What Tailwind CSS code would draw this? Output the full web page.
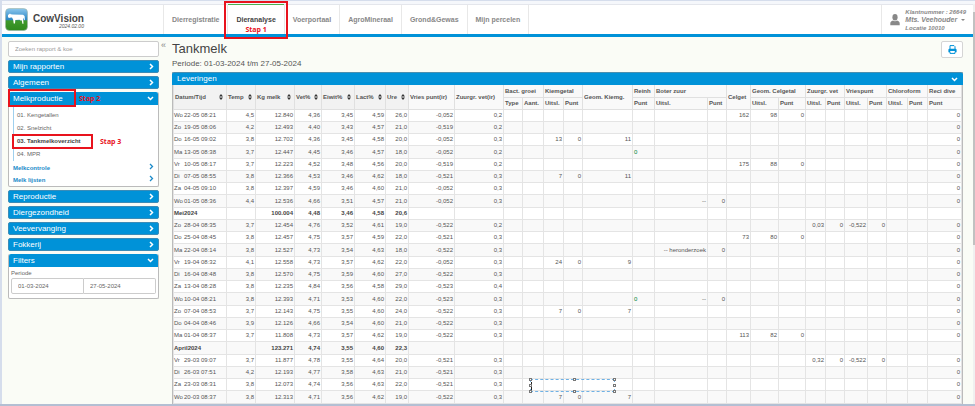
<!DOCTYPE html>
<html lang="nl">

<head>
    <meta charset="UTF-8" />
    <title>CowVision</title>
    <meta name="viewport" content="width=device-width, initial-scale=1.0" />
    <script src="https://cdn.jsdelivr.net/npm/@tailwindcss/browser@4"></script>
</head>

<body class="bg-[#d5ddec] font-['Liberation_Sans',sans-serif] text-[6px] leading-[8px] text-[#555]">
    <div class="min-h-screen flex flex-col pt-px pl-[2px] border-b-2 border-[#b3bfd3]">
        <!-- Header -->
        <header class="flex bg-white border-t-[3px] border-[#f5f7fb] border-b-0">
            <div class="flex-1 flex items-stretch h-[30px] border-t border-[#e4e6ec]">
                <div class="w-[161px] shrink-0 flex items-center pl-[3px] pb-px">
                    <svg class="w-[23px] h-[23px]" viewBox="0 0 23 23">
                        <defs>
                            <linearGradient id="sky" x1="0" y1="0" x2="0" y2="1">
                                <stop offset="0" stop-color="#8cc8ee" />
                                <stop offset=".5" stop-color="#2c86c4" />
                                <stop offset=".56" stop-color="#3f9a2c" />
                                <stop offset="1" stop-color="#2f8a1e" />
                            </linearGradient>
                        </defs>
                        <rect x=".5" y=".5" width="22" height="22" rx="4" fill="url(#sky)" stroke="#9db4a8" stroke-width=".6" />
                        <path fill="#fff" d="M3 7l2-1.600.8.900L8 6.600l10 .2 1.600 1.200.3 4-.7.2-.3-2.500-.7 1.600.3 4.400h-1.100l-.7-3.400-1 .2-1.200-.8-4.200.2-.3 3.600H8.700l-.5-3.800-1.200-2.300L6 9.600l-2.200.400L3 8.800z" />
                    </svg>
                    <div class="ml-[5px] pt-[5px]">
                        <p class="text-[10px] leading-[9px] font-bold text-[#444]">CowVision</p>
                        <p class="text-[5px] leading-[6px] italic text-right text-[#555]">2024.02.00</p>
                    </div>
                </div>
                <nav class="flex text-[7px] font-bold text-[#888] [&>a]:px-2 [&>a]:flex [&>a]:items-center [&>a]:border-r [&>a]:border-[#e8e8e8] border-l border-[#e8e8e8]">
                    <a href="#">Dierregistratie</a>
                    <a href="#" class="relative text-[#444]">
                        <span class="absolute inset-x-0 -top-px h-px bg-[#4caf50]"></span>
                        Dieranalyse
                        <span class="absolute z-10 -inset-x-[4px] -top-[4px] -bottom-[5px] border-2 border-[#e8131d]"></span>
                        <span class="absolute inset-x-0 bottom-0 text-center text-[#e8131d] font-['Open_Sans',sans-serif]">Stap 1</span>
                    </a>
                    <a href="#">Voerportaal</a>
                    <a href="#">AgroMineraal</a>
                    <a href="#">Grond&amp;Gewas</a>
                    <a href="#">Mijn percelen</a>
                </nav>
                <button type="button" class="ml-auto flex items-center gap-[5px] pl-2 pr-[7px] border-l border-[#e8e8e8] text-left text-[#888] font-bold italic">
                    <svg class="w-[10px] h-[12px]" viewBox="0 0 10 12" fill="#888">
                        <ellipse cx="5" cy="3.300" rx="2.600" ry="3.200" />
                        <path d="M.3 11.300V9.300C.3 7.500 1.500 7 3 6.500c1.200 1 2.800 1 4 0 1.500.5 2.700 1 2.700 2.800v2z" />
                    </svg>
                    <span>
                        <span class="block">Klantnummer : 26649</span>
                        <span class="flex items-center gap-[4px] text-[7px]">Mts. Veehouder
                            <svg class="w-[4px] h-[2px]" viewBox="0 0 4 2"><path fill="#888" d="M0 0h4L2 2z" /></svg>
                        </span>
                        <span class="block">Locatie 10010</span>
                    </span>
                </button>
            </div>
            <div class="w-[2px] bg-[#f0f0f0]"></div>
        </header>

        <div class="flex-1 flex bg-[#fafcf6] border-t-[3px] border-[#0092d8]">
            <!-- Sidebar -->
            <aside class="w-[151px] shrink-0 ml-[6px] pt-[4px] flex flex-col gap-[3px] text-[#666]">
                <input type="text" aria-label="Zoeken" placeholder="Zoeken rapport &amp; koe"
                    class="w-full h-4 px-[6px] bg-white border border-[#ccc] rounded-[2px] placeholder:text-[#999]" />
                <button type="button" class="flex items-center justify-between h-[13px] px-[4px] rounded-[2px] bg-[#0092d8] border border-[#3a8cb8] text-[8px] text-white">Mijn rapporten
                    <svg class="w-[5px] h-[7px]" viewBox="0 0 5 7"><path d="M1 1l2.500 2.500L1 6" fill="none" stroke="#fff" stroke-width="1.500" /></svg>
                </button>
                <button type="button" class="flex items-center justify-between h-[13px] px-[4px] rounded-[2px] bg-[#0092d8] border border-[#3a8cb8] text-[8px] text-white">Algemeen
                    <svg class="w-[5px] h-[7px]" viewBox="0 0 5 7"><path d="M1 1l2.500 2.500L1 6" fill="none" stroke="#fff" stroke-width="1.500" /></svg>
                </button>

                <section class="relative bg-white border border-[#bbb] border-t-0 rounded-[2px]">
                    <button type="button" class="w-full flex items-center justify-between h-[13px] px-[4px] rounded-t-[2px] bg-[#0092d8] text-[8px] text-white">Melkproductie
                        <svg class="w-[7px] h-[5px]" viewBox="0 0 7 5"><path d="M1 1l2.500 2.500L6 1" fill="none" stroke="#fff" stroke-width="1.500" /></svg>
                    </button>
                    <span class="absolute -left-px -top-[3px] w-[68px] h-[18px] border-2 border-[#e8131d]"></span>
                    <span class="absolute left-[70px] top-[3px] text-[7px] font-bold text-[#e8131d] font-['Open_Sans',sans-serif]">Stap 2</span>
                    <ul class="ml-[4px] pt-[4px] border-l border-[#9fd0ee] leading-[13px]">
                        <li><a href="#" class="pl-[3px]">01. Kengetallen</a></li>
                        <li><a href="#" class="pl-[3px]">02. Snelzicht</a></li>
                        <li class="relative font-bold text-[#444]"><a href="#" class="pl-[3px]">03. Tankmelkoverzicht</a>
                            <span class="absolute -left-[2px] -top-px w-[81px] h-[15px] border-2 border-[#e8131d]"></span>
                            <span class="absolute left-[86px] top-0 text-[7px] text-[#e8131d] font-['Open_Sans',sans-serif]">Stap 3</span>
                        </li>
                        <li><a href="#" class="pl-[3px]">04. MPR</a></li>
                    </ul>
                    <div class="pt-px pl-[4px] pr-[4px] leading-[12px] font-bold text-[#1b8ac9]">
                        <a href="#" class="flex justify-between items-center">Melkcontrole
                            <svg class="w-[5px] h-[7px] mb-[3px]" viewBox="0 0 5 7"><path d="M1 1l2.500 2.500L1 6" fill="none" stroke="#1b8ac9" stroke-width="1.300" /></svg>
                        </a>
                        <a href="#" class="flex justify-between items-center">Melk lijsten
                            <svg class="w-[5px] h-[7px] mb-[3px]" viewBox="0 0 5 7"><path d="M1 1l2.500 2.500L1 6" fill="none" stroke="#1b8ac9" stroke-width="1.300" /></svg>
                        </a>
                    </div>
                </section>

                <button type="button" class="flex items-center justify-between h-[13px] px-[4px] rounded-[2px] bg-[#0092d8] border border-[#3a8cb8] text-[8px] text-white">Reproductie
                    <svg class="w-[5px] h-[7px]" viewBox="0 0 5 7"><path d="M1 1l2.500 2.500L1 6" fill="none" stroke="#fff" stroke-width="1.500" /></svg>
                </button>
                <button type="button" class="flex items-center justify-between h-[13px] px-[4px] rounded-[2px] bg-[#0092d8] border border-[#3a8cb8] text-[8px] text-white">Diergezondheid
                    <svg class="w-[5px] h-[7px]" viewBox="0 0 5 7"><path d="M1 1l2.500 2.500L1 6" fill="none" stroke="#fff" stroke-width="1.500" /></svg>
                </button>
                <button type="button" class="flex items-center justify-between h-[13px] px-[4px] rounded-[2px] bg-[#0092d8] border border-[#3a8cb8] text-[8px] text-white">Veevervanging
                    <svg class="w-[5px] h-[7px]" viewBox="0 0 5 7"><path d="M1 1l2.500 2.500L1 6" fill="none" stroke="#fff" stroke-width="1.500" /></svg>
                </button>
                <button type="button" class="flex items-center justify-between h-[13px] px-[4px] rounded-[2px] bg-[#0092d8] border border-[#3a8cb8] text-[8px] text-white">Fokkerij
                    <svg class="w-[5px] h-[7px]" viewBox="0 0 5 7"><path d="M1 1l2.500 2.500L1 6" fill="none" stroke="#fff" stroke-width="1.500" /></svg>
                </button>

                <section class="bg-white border border-[#bbb] border-t-0 rounded-[2px] pb-[4px]">
                    <button type="button" class="w-full flex items-center justify-between h-[13px] px-[4px] rounded-t-[2px] bg-[#0092d8] text-[8px] text-white">Filters
                        <svg class="w-[7px] h-[5px]" viewBox="0 0 7 5"><path d="M1 1l2.500 2.500L6 1" fill="none" stroke="#fff" stroke-width="1.500" /></svg>
                    </button>
                    <div class="px-[2px] pt-[2px]">
                        <label for="from" class="block leading-[9px]">Periode</label>
                        <div class="flex">
                            <input id="from" type="text" value="01-03-2024" class="flex-1 min-w-0 h-4 px-[6px] border border-[#ccc] rounded-l-[2px]" />
                            <input type="text" aria-label="Periode tot" value="27-05-2024" class="flex-1 min-w-0 h-4 px-[6px] border border-l-0 border-[#ccc] rounded-r-[2px]" />
                        </div>
                    </div>
                </section>
            </aside>

            <button type="button" aria-label="Menu inklappen" class="self-start w-[13px] pt-[4px] pl-[2px] text-left text-[9px] text-[#888]">«</button>

            <!-- Tankmelk -->
            <main class="flex-1 min-w-0 pt-[4px] pr-[10px] flex flex-col">
                <div class="flex justify-between h-[31px]">
                    <div>
                        <h1 class="text-[13px] leading-[15px] text-[#444]">Tankmelk</h1>
                        <p class="text-[8px] leading-[15px]">Periode: 01-03-2024 t/m 27-05-2024</p>
                    </div>
                    <button type="button" aria-label="Afdrukken" class="w-[22px] h-[17px] flex items-center justify-center bg-white border border-[#d5d5d5] rounded-[2px]">
                        <svg class="w-[9px] h-[9px]" viewBox="0 0 9 9">
                            <path d="M2 4V.6h4l1 1V4M2 6.600v1.800h5V6.600" fill="none" stroke="#0092d8" />
                            <path fill="#0092d8" d="M.4 7.300V4.800Q.4 3.700 1.500 3.700h6q1.100 0 1.100 1.100v2.500H7V6H2v1.300z" />
                        </svg>
                    </button>
                </div>
                <section class="relative flex-1 bg-white border-x border-[#bbb]">
                    <h2 class="flex items-center justify-between h-[13px] -mx-px px-[5px] rounded-t-[2px] bg-[#0092d8] border-t border-[#4a8fb0] text-[8px] text-white">Leveringen
                        <svg class="w-[7px] h-[5px]" viewBox="0 0 7 5"><path d="M1 1l2.500 2.500L6 1" fill="none" stroke="#fff" stroke-width="1.500" /></svg>
                    </h2>
                    <table class="w-full table-fixed border-collapse whitespace-nowrap">
                        <colgroup>
                            <col class="w-[53px]" /><col class="w-[29px]" /><col class="w-[39px]" /><col class="w-[27px]" />
                            <col class="w-[33px]" /><col class="w-[31px]" /><col class="w-[23px]" /><col class="w-[46px]" />
                            <col class="w-[49px]" /><col class="w-[19px]" /><col class="w-[21px]" /><col class="w-[20px]" />
                            <col class="w-[19px]" /><col class="w-[50px]" /><col class="w-[22px]" /><col class="w-[53px]" />
                            <col class="w-[19px]" /><col class="w-[24px]" /><col class="w-[28px]" /><col class="w-[27px]" />
                            <col class="w-[20px]" /><col class="w-[19px]" /><col class="w-[23px]" /><col class="w-[19px]" />
                            <col class="w-[21px]" /><col class="w-[20px]" /><col class="w-[34px]" />
                        </colgroup>
                        <thead class="text-left [&_th]:h-[12px] [&_th]:p-0 [&_th]:pl-px [&_th]:border [&_th]:border-[#e0e0e0] [&_th]:border-t-0 bg-[#f9f9f9]">
                            <tr id="head"></tr>
                            <tr>
                                <th>Type</th><th>Aant.</th><th>Uitsl.</th><th>Punt</th><th>Punt</th><th>Uitsl.</th><th>Punt</th>
                                <th>Uitsl.</th><th>Punt</th><th>Uitsl.</th><th>Punt</th><th>Uitsl.</th><th>Punt</th>
                                <th>Uitsl.</th><th>Punt</th><th>Punt</th>
                            </tr>
                        </thead>
                        <tbody id="rows" class="text-right [&>tr:nth-child(even)]:bg-[#f9f9f9] [&>tr:nth-child(4n)>td]:h-[13px] [&_td]:h-[12px] [&_td]:p-0 [&_td]:pr-px [&_td]:border [&_td]:border-[#e4e4e4]"></tbody>
                    </table>
                    <!-- Selected text box -->
                    <div class="absolute left-[357px] top-[307px] w-[85px] h-[13px] border border-dashed border-[#6fb1e4]">
                        <span class="absolute left-0 top-[2px] w-px h-[8px] bg-[#222]"></span>
                        <span class="absolute -left-[2px] -top-[2px] size-[3px] border border-[#777] bg-white"></span>
                        <span class="absolute left-1/2 -top-[2px] size-[3px] border border-[#777] bg-white"></span>
                        <span class="absolute -right-[2px] -top-[2px] size-[3px] border border-[#777] bg-white"></span>
                        <span class="absolute -left-[2px] top-[4px] size-[3px] border border-[#777] bg-white"></span>
                        <span class="absolute -right-[2px] top-[4px] size-[3px] border border-[#777] bg-white"></span>
                        <span class="absolute -left-[2px] -bottom-[2px] size-[3px] border border-[#777] bg-white"></span>
                        <span class="absolute left-1/2 -bottom-[2px] size-[3px] border border-[#777] bg-white"></span>
                        <span class="absolute -right-[2px] -bottom-[2px] size-[3px] border border-[#777] bg-white"></span>
                    </div>
                </section>
            </main>
            <div class="w-[2px] shrink-0 -mt-[25px] bg-[#f0f0f0]">
                <div class="h-[233px] bg-[#c1c1c1]"></div>
            </div>
        </div>
    </div>

    <script>
        const sortable = ["Datum/Tijd", "Temp", "Kg melk", "Vet%", "Eiwit%", "Lact%", "Ure"];
        const groups = [
            ["Vries punt(ir)", 0], ["Zuurgr. vet(ir)", 0], ["Bact. groei", 2], ["Kiemgetal", 2], ["Geom. Kiemg.", 0],
            ["Reinh", 1], ["Boter zuur", 2], ["Celget", 0], ["Geom. Celgetal", 2], ["Zuurgr. vet", 2],
            ["Vriespunt", 2], ["Chloroform", 2], ["Reci dive", 1],
        ];
        const arrows = '<svg class="w-[4px] h-[6px]" viewBox="0 0 4 6"><path fill="#333" d="M2 0l2 2.600H0zM2 6l2-2.600H0z"/></svg>';

        document.getElementById("head").innerHTML =
            sortable.map((t) => `<th rowspan="2" class="bg-[#f2f2f2]"><span class="flex items-center justify-between pr-[3px]">${t}${arrows}</span></th>`).join("") +
            groups.map(([t, n]) => n ? `<th colspan="${n}">${t}</th>` : `<th rowspan="2">${t}</th>`).join("");

        // day, date, first values, then the extra results by column number
        const rows = [
            ["Wo", "22-05 08:21", "4,5 12.840 4,36 3,45 4,59 26,0 -0,052 0,2", { 17: "162", 18: "98", 19: "0" }],
            ["Zo", "19-05 08:06", "4,2 12.493 4,40 3,43 4,57 21,0 -0,519 0,2", {}],
            ["Do", "16-05 09:02", "3,8 12.702 4,36 3,45 4,58 20,0 -0,052 0,3", { 11: "13", 12: "0", 13: "11" }],
            ["Ma", "13-05 08:38", "3,7 12.447 4,45 3,46 4,57 18,0 -0,052 0,2", { 14: "0" }],
            ["Vr", "10-05 08:17", "3,7 12.223 4,52 3,48 4,56 20,0 -0,519 0,2", { 17: "175", 18: "88", 19: "0" }],
            ["Di", "07-05 08:55", "3,8 12.366 4,53 3,46 4,62 18,0 -0,521 0,3", { 11: "7", 12: "0", 13: "11" }],
            ["Za", "04-05 09:10", "3,8 12.397 4,59 3,46 4,60 21,0 -0,052 0,3", {}],
            ["Wo", "01-05 08:36", "4,4 12.536 4,66 3,51 4,57 21,0 -0,052 0,3", { 15: "--", 16: "0" }],
            ["Mei2024", "", " 100.004 4,48 3,46 4,58 20,6  ", null],
            ["Zo", "28-04 08:35", "3,7 12.454 4,76 3,52 4,61 19,0 -0,522 0,2", { 20: "0,03", 21: "0", 22: "-0,522", 23: "0" }],
            ["Do", "25-04 08:45", "3,8 12.457 4,75 3,57 4,59 22,0 -0,521 0,3", { 17: "73", 18: "80", 19: "0" }],
            ["Ma", "22-04 08:14", "3,8 12.527 4,73 3,54 4,63 18,0 -0,522 0,3", { 15: "-- heronderzoek", 16: "0" }],
            ["Vr", "19-04 08:32", "4,1 12.558 4,73 3,57 4,62 22,0 -0,052 0,3", { 11: "24", 12: "0", 13: "9" }],
            ["Di", "16-04 08:48", "3,8 12.570 4,75 3,59 4,60 27,0 -0,522 0,3", {}],
            ["Za", "13-04 08:28", "3,8 12.235 4,84 3,56 4,58 29,0 -0,523 0,4", {}],
            ["Wo", "10-04 08:21", "3,8 12.393 4,71 3,53 4,60 22,0 -0,523 0,3", { 14: "0", 15: "--", 16: "0" }],
            ["Zo", "07-04 08:53", "3,7 12.143 4,75 3,55 4,60 24,0 -0,522 0,3", { 11: "7", 12: "0", 13: "7" }],
            ["Do", "04-04 08:46", "3,9 12.126 4,66 3,54 4,60 21,0 -0,522 0,3", {}],
            ["Ma", "01-04 08:37", "3,7 11.808 4,73 3,57 4,62 19,0 -0,522 0,3", { 17: "113", 18: "82", 19: "0" }],
            ["April2024", "", " 123.271 4,74 3,55 4,60 22,3  ", null],
            ["Vr", "29-03 09:07", "3,7 11.877 4,78 3,55 4,64 20,0 -0,521 0,3", { 20: "0,32", 21: "0", 22: "-0,522", 23: "0" }],
            ["Di", "26-03 07:51", "4,2 12.193 4,77 3,58 4,63 21,0 -0,521 0,3", {}],
            ["Za", "23-03 08:31", "3,8 12.073 4,74 3,56 4,63 22,0 -0,521 0,3", {}],
            ["Wo", "20-03 08:37", "3,8 12.313 4,71 3,56 4,62 19,0 -0,522 0,3", { 11: "7", 12: "0", 13: "7" }],
        ];

        document.getElementById("rows").innerHTML = rows.map(([day, date, values, extra]) => {
            const cells = values.split(" ");
            let html = extra
                ? `<td class="text-left"><span class="inline-block w-[10px]">${day}</span>${date}</td>`
                : `<td class="text-left">${day}</td>`;
            for (let i = 1; i < 27; i++) {
                let text = i < 9 ? cells[i - 1] : (extra && extra[i]) || "";
                if (i === 26 && extra) text = "0";
                html += i === 14 ? `<td class="text-left text-green-700"><span class="pl-px">${text}</span></td>` : `<td>${text}</td>`;
            }
            return `<tr class="${extra ? "" : "font-bold text-[#444]"}">${html}</tr>`;
        }).join("");
    </script>
</body>

</html>
